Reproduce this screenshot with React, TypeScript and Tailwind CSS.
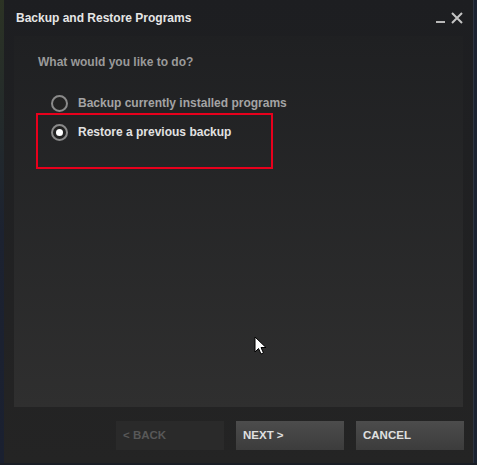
import React from "react";

function Radio({ checked }: { checked?: boolean }) {
  return (
    <span className="flex h-[17px] w-[17px] items-center justify-center rounded-full border-2 border-[#8a8a8a] bg-[#222]">
      {checked && <span className="h-[7px] w-[7px] rounded-full bg-white" />}
    </span>
  );
}

function Cursor() {
  return (
    <svg width="14" height="20" viewBox="0 0 14 20" className="absolute left-[254px] top-[336px]">
      <path d="M1 1 L1 16 L4.5 12.5 L7 18 L9.5 17 L7 11.5 L12 11.5 Z" fill="#fff" stroke="#000" strokeWidth="1" />
    </svg>
  );
}

export default function App() {
  return (
    <div
      className="relative flex h-[465px] w-[477px] flex-col bg-[#1a1e25]"
      style={{ fontFamily: '"Liberation Sans", Arial, sans-serif' }}
    >
      <div className="flex h-[463px]">
        <div className="w-[4px] bg-gradient-to-b from-[#2c3324] via-[#1c2230] to-[#1a2030]" />
        <div className="flex flex-1 flex-col bg-gradient-to-b from-[#1d1e21] to-[#242424] border-r border-[#2e3440]">
          {/* title bar */}
          <div className="flex h-[36px] items-center justify-between pl-[12px] pr-[10px]">
            <span className="text-[12px] font-bold text-[#e6e6e6]">Backup and Restore Programs</span>
            <div className="flex items-center gap-[6px] text-[#b8b8b8]">
              <span className="mt-[8px] h-[2px] w-[9px] bg-[#b8b8b8]" />
              <svg width="12" height="12" viewBox="0 0 12 12">
                <path d="M1 1 L11 11 M11 1 L1 11" stroke="#c4c4c4" strokeWidth="2" />
              </svg>
            </div>
          </div>

          {/* content panel */}
          <div className="mx-[10px] flex h-[371px] flex-col bg-gradient-to-b from-[#1f2022] to-[#2f2f2f] pl-[24px] pt-[17px]">
            <div className="text-[12px] font-bold text-[#9a9a9a]">What would you like to do?</div>
            <div className="mt-[23px] flex items-center gap-[10px] pl-[13px]">
              <Radio />
              <span className="text-[12px] font-bold text-[#a4a4a4]">Backup currently installed programs</span>
            </div>
            <div className="-ml-[2px] mt-[1px] h-[56px] w-[237px] border-2 border-[#e8001c] pl-[13px] pt-[8px]">
              <div className="flex items-center gap-[10px]">
                <Radio checked />
                <span className="text-[12px] font-bold text-[#e2e2e2]">Restore a previous backup</span>
              </div>
            </div>
          </div>

          {/* footer buttons */}
          <div className="flex justify-end gap-[12px] pr-[9px] pt-[14px]">
            <button className="h-[29px] w-[108px] bg-[#2a2a2a] pl-[7px] text-left text-[11.5px] font-bold text-[#585858]">
              &lt; BACK
            </button>
            <button className="h-[29px] w-[108px] bg-gradient-to-b from-[#4c4c4c] to-[#3c3c3c] pl-[7px] text-left text-[11.5px] font-bold text-[#e0e0e0]">
              NEXT &gt;
            </button>
            <button className="h-[29px] w-[108px] bg-gradient-to-b from-[#4c4c4c] to-[#3c3c3c] pl-[7px] text-left text-[11.5px] font-bold text-[#e0e0e0]">
              CANCEL
            </button>
          </div>
        </div>
        <div className="w-[3px] bg-[#1b2230]" />
      </div>
      <Cursor />
    </div>
  );
}
